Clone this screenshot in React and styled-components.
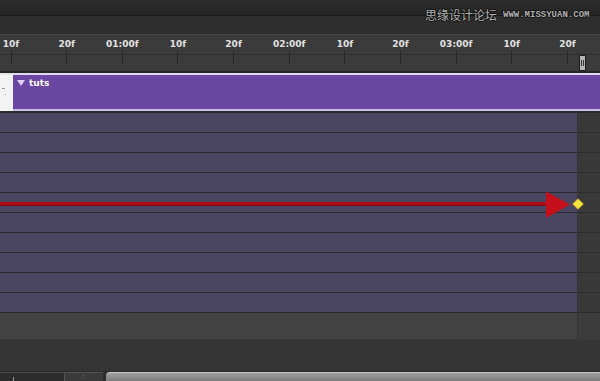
import React from 'react';
import styled, { createGlobalStyle } from 'styled-components';

const Global = createGlobalStyle`
  html, body {
    margin: 0;
    padding: 0;
    background: #353535;
    overflow: hidden;
  }
  #root {
    width: 600px;
    height: 381px;
  }
`;

const Screen = styled.div`
  width: 600px;
  height: 381px;
  display: flex;
  flex-direction: column;
  overflow: hidden;
  font-family: 'DejaVu Sans', 'Liberation Sans', sans-serif;
`;

const TopBar = styled.div`
  height: 15px;
  background: linear-gradient(#2b2b2b, #262626);
  border-bottom: 1px solid #1b1b1b;
  position: relative;
`;

const Watermark = styled.div`
  position: absolute;
  left: 425px;
  top: 8px;
  display: flex;
  align-items: center;
  gap: 6px;
  color: #b0b0b0;
  text-shadow: 1px 0 0 #111, -1px 0 0 #111, 0 1px 0 #111, 0 -1px 0 #111;
  z-index: 2;
`;

const WmCn = styled.span`
  font-family: 'Noto Sans CJK SC', sans-serif;
  font-size: 12px;
  line-height: 14px;
`;

const WmUrl = styled.span`
  font-family: 'Liberation Mono', monospace;
  font-size: 9px;
  font-weight: bold;
  line-height: 14px;
`;

const SubBar = styled.div`
  height: 18px;
  background: #2e2e2e;
`;

const Ruler = styled.div`
  height: 36px;
  background: #3b3b3b;
  border-top: 1px solid #454545;
  position: relative;
  overflow: hidden;
`;

const RulerGrid = styled.div`
  display: grid;
  grid-template-columns: repeat(11, 55.65px);
  margin-left: -16.8px;
  height: 100%;
  position: relative;
`;

const Baseline = styled.div`
  position: absolute;
  left: 0;
  right: 0;
  top: 19px;
  height: 1px;
  background: #2c2c2c;
`;

const Cell = styled.div`
  display: flex;
  flex-direction: column;
  align-items: center;
`;

const Label = styled.span`
  margin-top: 4px;
  font-size: 9px;
  font-weight: bold;
  line-height: 10px;
  color: #e2e2e2;
  white-space: nowrap;
`;

const Tick = styled.span`
  width: 1px;
  height: 13px;
  margin-top: 2px;
  background: #262626;
`;

const Handle = styled.div`
  position: absolute;
  left: 579px;
  top: 20px;
  width: 5px;
  height: 14px;
  background: #b5b5b5;
  border: 1px solid #1c1c1c;
  border-radius: 1px;
  display: flex;
  justify-content: center;
  align-items: center;
  gap: 1px;

  &::before, &::after {
    content: '';
    width: 1px;
    height: 6px;
    background: #333;
  }
`;

const Track = styled.div`
  height: 38px;
  border-top: 2px solid #262626;
  display: flex;
`;

const TrackSide = styled.div`
  width: 13px;
  background: #f3f3f3;
  border-top: 2px solid #e6e6e6;
  position: relative;

  &::before, &::after {
    content: '';
    position: absolute;
    left: 2px;
    width: 3px;
    height: 1px;
    background: #999;
  }
  &::before { top: 13px; }
  &::after { top: 19px; left: 5px; width: 1px; }
`;

const TrackBody = styled.div`
  flex: 1;
  background: #6a47a2;
  border-top: 2px solid #e4d8f4;
  border-bottom: 2px solid #cdbde6;
  display: flex;
  align-items: flex-start;
  gap: 4px;
  padding: 3px 0 0 4px;
`;

const Caret = styled.span`
  width: 0;
  height: 0;
  margin-top: 2px;
  border-left: 4px solid transparent;
  border-right: 4px solid transparent;
  border-top: 6px solid #ddd0f6;
`;

const TrackName = styled.span`
  font-size: 9px;
  font-weight: bold;
  line-height: 11px;
  color: #fbfbfb;
`;

const Work = styled.div`
  display: flex;
  border-top: 2px solid #2a2830;
  position: relative;
`;

const Main = styled.div`
  flex: 1;
  display: flex;
  flex-direction: column;
`;

const Side = styled.div`
  width: 22px;
  display: flex;
  flex-direction: column;
  background: #393939;
  border-left: 1px solid #333;
`;

const Row = styled.div`
  height: 20px;
  box-sizing: border-box;
  background: ${p => (p.$side ? '#393939' : '#4a4560')};
  border-bottom: 1px solid ${p => (p.$side ? '#2c2c2c' : '#2b2933')};
`;

const Empty = styled.div`
  height: 26px;
  background: ${p => (p.$side ? '#3c3c3c' : '#424242')};
  border-bottom: 1px solid #393939;
`;

const Overlay = styled.svg`
  position: absolute;
  left: 0;
  top: 0;
  pointer-events: none;
`;

const Lower = styled.div`
  height: 31px;
  background: #353535;
`;

const Bottom = styled.div`
  flex: 1;
  display: flex;
  background: #2d2d2d;
  border-top: 1px solid #2a2a2a;
`;

const ZoomBox = styled.div`
  width: 64px;
  background: #2c2c2c;
  border-top: 1px solid #4a4a4a;
  border-right: 1px solid #555;
  position: relative;

  &::after {
    content: '';
    position: absolute;
    left: 13px;
    top: 4px;
    width: 1px;
    height: 4px;
    background: #999;
  }
`;

const Knobs = styled.div`
  width: 38px;
  background: #3a3a3a;
  border-top: 1px solid #555;
  color: #999;
  font-size: 7px;
  line-height: 8px;
  padding-left: 16px;
  box-sizing: border-box;
`;

const Scroll = styled.div`
  flex: 1;
  margin-left: 3px;
  border-top-left-radius: 4px;
  background: linear-gradient(#a0a0a0, #7c7c7c);
  border-top: 1px solid #c4c4c4;
`;

const ticks = ['10f', '20f', '01:00f', '10f', '20f', '02:00f', '10f', '20f', '03:00f', '10f', '20f'];

export default function App() {
  const rows = Array.from({ length: 10 });
  return (
    <Screen>
      <Global />
      <TopBar>
        <Watermark>
          <WmCn>思缘设计论坛</WmCn>
          <WmUrl>WWW.MISSYUAN.COM</WmUrl>
        </Watermark>
      </TopBar>
      <SubBar />
      <Ruler>
        <RulerGrid>
          {ticks.map((t, i) => (
            <Cell key={i}>
              <Label>{t}</Label>
              <Tick />
            </Cell>
          ))}
        </RulerGrid>
        <Baseline />
        <Handle />
      </Ruler>
      <Track>
        <TrackSide />
        <TrackBody>
          <Caret />
          <TrackName>tuts</TrackName>
        </TrackBody>
      </Track>
      <Work>
        <Main>
          {rows.map((_, i) => <Row key={i} />)}
          <Empty />
        </Main>
        <Side>
          {rows.map((_, i) => <Row key={i} $side />)}
          <Empty $side />
        </Side>
        <Overlay width="600" height="230" viewBox="0 0 600 230">
          <rect x="0" y="89" width="550" height="3.5" fill="#b10d12" />
          <rect x="0" y="92" width="550" height="1" fill="#6e0a10" />
          <polygon points="546,78.5 546,105 570,91.5" fill="#c4101a" />
          <polygon points="578,85.5 583.5,91 578,96.5 572.5,91" fill="#f6e23c" stroke="#9a8a20" strokeWidth="0.6" />
        </Overlay>
      </Work>
      <Lower />
      <Bottom>
        <ZoomBox />
        <Knobs>∴</Knobs>
        <Scroll />
      </Bottom>
    </Screen>
  );
}
